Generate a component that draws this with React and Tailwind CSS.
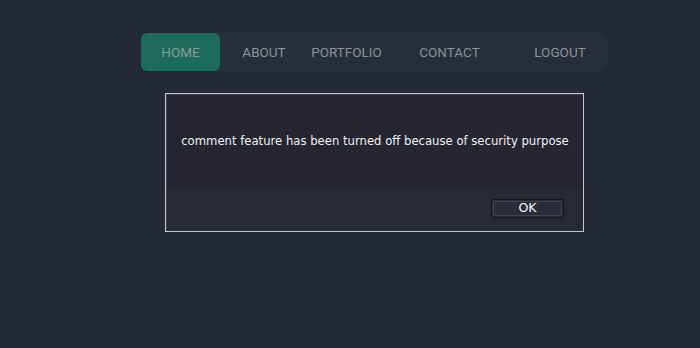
export default function App() {
  return (
    <div className="w-[700px] h-[348px] bg-[#232a35] overflow-hidden relative" style={{ fontFamily: 'Roboto, "Noto Sans", sans-serif' }}>
      <div className="pt-[33px] pl-[141px]">
        <nav className="w-[466px] h-[38px] rounded-[6px] bg-[#262e39] flex items-center text-[13.5px]">
          <div className="w-[79px] h-[38px] rounded-[6px] bg-[#1c6b5b] flex items-center justify-center text-[#8a9a97]">HOME</div>
          <div className="w-[88px] text-center text-[#8c9198]">ABOUT</div>
          <div className="w-[77px] text-center text-[#8c9198]">PORTFOLIO</div>
          <div className="w-[129px] text-center text-[#8c9198]">CONTACT</div>
          <div className="w-[92px] text-center text-[#8c9198]">LOGOUT</div>
        </nav>
      </div>
      <div className="ml-[165px] mt-[22px] w-[419px] h-[139px] border border-[#c3c6cc] bg-[#252631] flex flex-col" style={{ fontFamily: '"DejaVu Sans", sans-serif' }}>
        <div className="border-l border-t border-[#3b3e4a] flex-1 flex flex-col">
          <div className="h-[93px] flex items-center justify-center text-[11.65px] whitespace-nowrap text-[#eef0f5] pt-[1px]">
            comment feature has been turned off because of security purpose
          </div>
          <div className="flex-1 bg-[#272933] flex justify-end items-start pt-[11px] pr-[19px]">
            <div className="w-[73px] h-[19px] border border-[#15161b] rounded-[2px] bg-[#2a2c38] p-[1px]">
              <div className="w-full h-full border border-[#3f4354] rounded-[1px] flex items-center justify-center text-[12.5px] text-[#f2f4f8]">OK</div>
            </div>
          </div>
        </div>
      </div>
    </div>
  );
}
